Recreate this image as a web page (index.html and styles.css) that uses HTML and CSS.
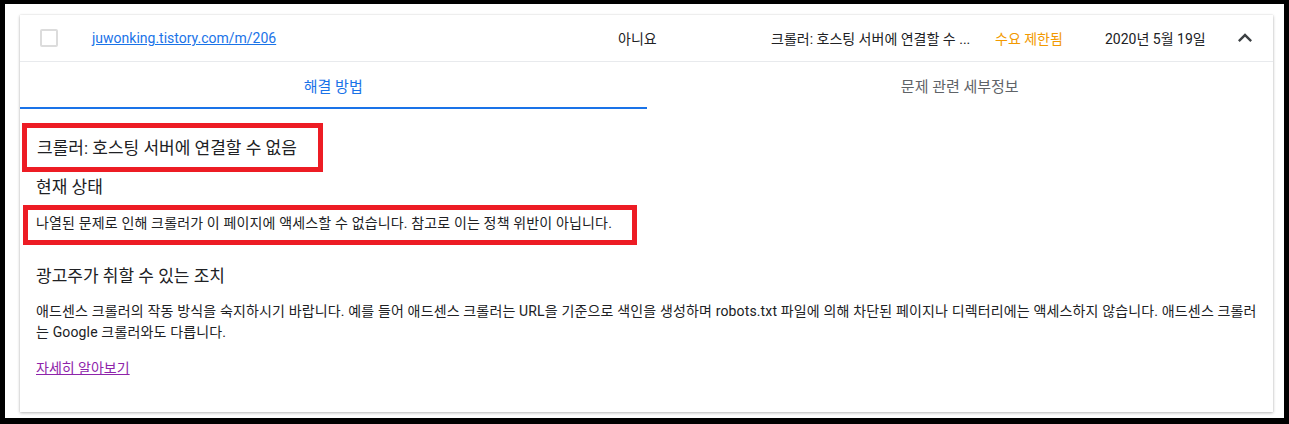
FILE: index.html
```html
<!DOCTYPE html>
<html lang="ko">
<head>
<meta charset="utf-8">
<title>크롤러 오류</title>
<link rel="stylesheet" href="styles.css">
</head>
<body>
<div class="frame">
  <div class="card">
    <div class="row">
      <div class="cell-check"><span class="checkbox"></span></div>
      <div class="cell-url"><a class="url" href="#">juwonking.tistory.com/m/206</a></div>
      <div class="cell-no">아니요</div>
      <div class="cell-issue">크롤러: 호스팅 서버에 연결할 수 ...</div>
      <div class="cell-status">수요 제한됨</div>
      <div class="cell-date">2020년 5월 19일</div>
      <div class="cell-toggle">
        <svg class="chev" viewBox="0 0 24 24" width="28" height="28"><path d="M12 8l-6 6 1.41 1.41L12 10.83l4.59 4.58L18 14z"/></svg>
      </div>
    </div>
    <div class="tabs">
      <div class="tab active">해결 방법</div>
      <div class="tab">문제 관련 세부정보</div>
    </div>
    <div class="content">
      <div class="mark mark-title"><h2 class="title">크롤러: 호스팅 서버에 연결할 수 없음</h2></div>
      <h3 class="sub">현재 상태</h3>
      <div class="mark mark-status"><p class="status">나열된 문제로 인해 크롤러가 이 페이지에 액세스할 수 없습니다. 참고로 이는 정책 위반이 아닙니다.</p></div>
      <h3 class="sub sub-actions">광고주가 취할 수 있는 조치</h3>
      <p class="para">애드센스 크롤러의 작동 방식을 숙지하시기 바랍니다. 예를 들어 애드센스 크롤러는 URL을 기준으로 색인을 생성하며 robots.txt 파일에 의해 차단된 페이지나 디렉터리에는 액세스하지 않습니다. 애드센스 크롤러는 Google 크롤러와도 다릅니다.</p>
      <a class="more" href="#">자세히 알아보기</a>
    </div>
  </div>
</div>
</body>
</html>
```

FILE: styles.css
```css
* { box-sizing: border-box; }
html, body { margin: 0; padding: 0; }
body {
  background: #000;
  font-family: Roboto, "Noto Sans CJK KR", sans-serif;
  color: #202124;
}
.frame {
  margin: 4px 5px 6px 5px;
  height: 414px;
  background: #fff;
  padding: 11px 11px 6px 15px;
}
.card {
  height: 397px;
  background: #fff;
  box-shadow: 0 1px 3px rgba(0,0,0,0.28), 0 0 1px rgba(0,0,0,0.12);
}
.row {
  height: 47px;
  border-bottom: 1px solid #e8eaed;
  display: flex;
  align-items: center;
  font-size: 14px;
  padding-left: 20px;
}
.cell-check { width: 52px; display: flex; align-items: center; }
.checkbox {
  width: 18px; height: 18px;
  border: 2px solid #dcdcdc;
  border-radius: 2px;
  display: block;
}
.cell-url { width: 526px; }
.url { color: #1a73e8; text-decoration: underline; }
.cell-no { width: 153px; color: #202124; }
.cell-issue { width: 224px; color: #202124; white-space: nowrap; }
.cell-status { width: 110px; color: #f29900; }
.cell-date { width: 126px; color: #202124; }
.cell-toggle { width: 28px; height: 28px; }
.chev { display: block; fill: #3c4043; }
.tabs {
  display: flex;
  height: 47px;
}
.tab {
  flex: 1;
  display: flex;
  align-items: center;
  justify-content: center;
  font-size: 15px;
  color: #5f6368;
  padding-top: 2px;
  border-bottom: 2px solid transparent;
}
.tab.active { color: #1a73e8; border-bottom-color: #1a73e8; }
.content { padding: 14px 16px 0 16px; }
.mark {
  border: 5px solid #ed1c24;
  width: fit-content;
}
.mark-title { margin-left: -14px; padding: 8px 21px 7px 10px; }
.title { margin: 0; font-size: 17px; font-weight: 400; line-height: 24px; }
.sub { margin: 3px 0 0 0; font-size: 17px; font-weight: 400; line-height: 24px; }
.mark-status { margin-top: 6px; margin-left: -13px; padding: 3px 20px 7px 8px; }
.status { margin: 0; font-size: 14px; line-height: 20px; letter-spacing: 0.15px; }
.sub-actions { margin-top: 19px; }
.para { margin: 13px 0 0 0; font-size: 14px; line-height: 21px; letter-spacing: 0.15px; }
.more {
  display: inline-block;
  margin-top: 15px;
  font-size: 14px;
  line-height: 20px;
  color: #8e24aa;
}
```
